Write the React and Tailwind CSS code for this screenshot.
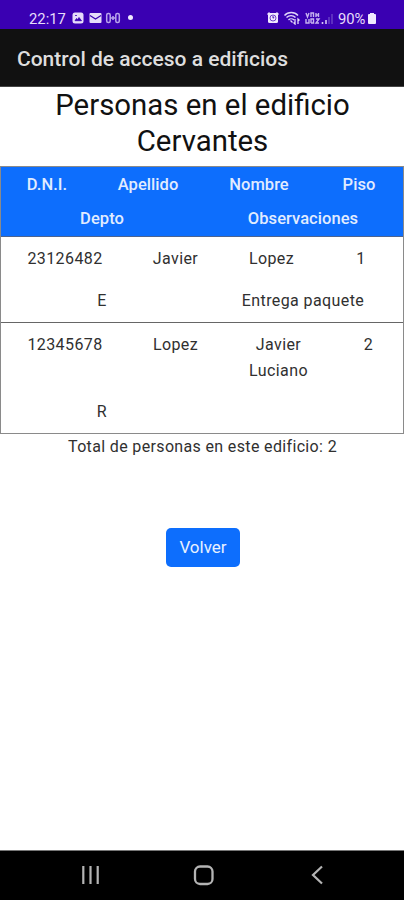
import React from "react";

function StatusBar() {
  return (
    <div className="flex h-[29px] items-start bg-[#3a00b2] pl-[29px] pt-[8px] text-[14.8px] leading-[20px] text-[#e6dcfa]">
      <span className="mt-[1px] w-[43px] whitespace-nowrap">22:17</span>
      <svg className="mt-[4px] h-[12px] w-[60px]" viewBox="0 0 60 12" fill="none">
        <rect x="0.5" y="0.5" width="11" height="11" rx="2.5" fill="#e6dcfa" />
        <path d="M3 8.700h6.500L7 5.500 5.500 7.500 4.500 6.500zM3 3.500h2" fill="#3a00b2" stroke="#3a00b2" strokeWidth="0.800" />
        <rect x="17.5" y="1" width="12" height="10" rx="1" fill="#e6dcfa" />
        <path d="M18 3.5l5.5 3.5L29 3.5" stroke="#3a00b2" strokeWidth="1.2" />
        <rect x="34.700" y="1.500" width="3.500" height="9" rx="1.500" stroke="#b9a3ec" strokeWidth="1.500" />
        <rect x="43.800" y="1.500" width="3.500" height="9" rx="1.500" stroke="#b9a3ec" strokeWidth="1.500" />
        <path d="M38.500 6h5M41 4v4" stroke="#b9a3ec" strokeWidth="1.600" />
      </svg>
      <span className="-ml-[4px] mt-[7px] h-[5px] w-[5px] rounded-full bg-[#f0e9ff]" />
      <svg className="ml-[134px] mt-[3px] h-[14px] w-[66px]" viewBox="0 0 66 14" fill="none">
        <rect x="1" y="2" width="10" height="10" rx="1.5" fill="#f0e9ff" />
        <path d="M0.500 3.500l2-2M11.500 3.500l-2-2" stroke="#f0e9ff" strokeWidth="1.300" />
        <circle cx="6" cy="7" r="3" stroke="#3a00b2" strokeWidth="0.700" />
        <path d="M6 5v2.200l1.300-0.900" stroke="#3a00b2" strokeWidth="0.900" />
        <path d="M17.500 4.500c3.500-4 10-4 13.500 0M19.500 6.500c2.500-2.500 6.500-2.500 9 0M21.500 9c1.500-1.500 4-1.500 5.500 0" stroke="#e0d4fa" strokeWidth="1.400" />
        <path d="M23.500 9.500l2 2M28 8v5l-1.500-1.500M31 13V8l1.500 1.500" stroke="#e6dcfa" strokeWidth="1.300" />
        <path d="M39 2l1.500 4L42 2M44 6V2h2.500v4M49 2v4M49 4h2.500M51.500 2v4M39 8v4h3V8M44 12V8h2.500v4H44M49 8h3l-3 4h3" stroke="#c6b3f0" strokeWidth="1.400" />
        <path d="M55.500 11v2M59 9v4" stroke="#d5c6f6" strokeWidth="1.600" />
        <path d="M62 6v7M65 3v10" stroke="#6f47c9" strokeWidth="1.300" />
      </svg>
      <span className="ml-[5px] mt-[1px] w-[30px] whitespace-nowrap tracking-[-0.1px]">90%</span>
      <span className="mt-[5px] flex h-[11px] w-[8px] flex-col items-center">
        <span className="h-[1px] w-[4px] bg-[#f0e9ff]" />
        <span className="h-[10px] w-[8px] rounded-[1px] bg-[#f0e9ff]" />
      </span>
    </div>
  );
}

function Cell({ className, children }) {
  return <div className={"shrink-0 whitespace-pre-line text-center " + className}>{children}</div>;
}

export default function App() {
  return (
    <div className="flex h-[900px] w-[404px] flex-col overflow-hidden bg-white font-['Roboto',sans-serif] text-[#303030]">
      <StatusBar />
      <header className="flex h-[58px] items-center border-b border-[#444] bg-[#111] pl-[17px] pt-[5px]">
        <span className="whitespace-nowrap text-[21px] font-medium text-[#dedede]">Control de acceso a edificios</span>
      </header>
      <main className="flex h-[763px] flex-col">
        <h1 className="h-[79px] pl-[1px] pt-[1px] text-center text-[29.4px] leading-[35.5px] text-[#111]">
          Personas en el edificio
          <br />
          Cervantes
        </h1>
        <div className="h-[268px] border border-[#8a8a8a] text-[16px] leading-[26px] tracking-[0.4px]">
          <div className="h-[70px] border-b border-[#4c6490] bg-[#0d6efd] pt-[5px] text-[16.5px] font-medium tracking-[0.05px] text-[#e1ecff]">
            <div className="flex h-[34px]">
              <Cell className="w-[92px]">D.N.I.</Cell>
              <Cell className="w-[110px]">Apellido</Cell>
              <Cell className="w-[112px]">Nombre</Cell>
              <Cell className="w-[88px]">Piso</Cell>
            </div>
            <div className="flex">
              <Cell className="w-[202px]">Depto</Cell>
              <Cell className="w-[200px]">Observaciones</Cell>
            </div>
          </div>
          <div className="h-[86px] border-b border-[#666] pt-[9px]">
            <div className="flex h-[42px]">
              <Cell className="w-[128px]">23126482</Cell>
              <Cell className="w-[93px]">Javier</Cell>
              <Cell className="w-[99px]">Lopez</Cell>
              <Cell className="w-[80px]">1</Cell>
            </div>
            <div className="flex">
              <Cell className="w-[202px]">E</Cell>
              <Cell className="w-[200px]">Entrega paquete</Cell>
            </div>
          </div>
          <div className="h-[110px] pt-[9px]">
            <div className="flex h-[67px]">
              <Cell className="w-[128px]">12345678</Cell>
              <Cell className="w-[93px]">Lopez</Cell>
              <Cell className="w-[113px]">{"Javier\nLuciano"}</Cell>
              <Cell className="w-[67px]">2</Cell>
            </div>
            <Cell className="w-[202px]">R</Cell>
          </div>
        </div>
        <p className="pl-[1px] text-center text-[16px] leading-[26px] tracking-[0.35px]">Total de personas en este edificio: 2</p>
        <button className="ml-[166px] mt-[68px] h-[39px] w-[74px] rounded-[5px] bg-[#0d6efd] text-[17px] text-[#e8f1ff]">
          Volver
        </button>
      </main>
      <nav className="h-[50px] border-t border-[#777] bg-black">
        <svg className="h-[49px] w-[404px]" viewBox="0 0 404 49" fill="none" stroke="#b4b4b4">
          <path d="M83.300 15v18M90.500 15v18M97.700 15v18" strokeWidth="2.200" />
          <rect x="195" y="15.500" width="17.500" height="17.500" rx="5" strokeWidth="2.300" />
          <path d="M322 15.500l-9 8.500 9 8.500" strokeWidth="2.200" />
        </svg>
      </nav>
    </div>
  );
}
